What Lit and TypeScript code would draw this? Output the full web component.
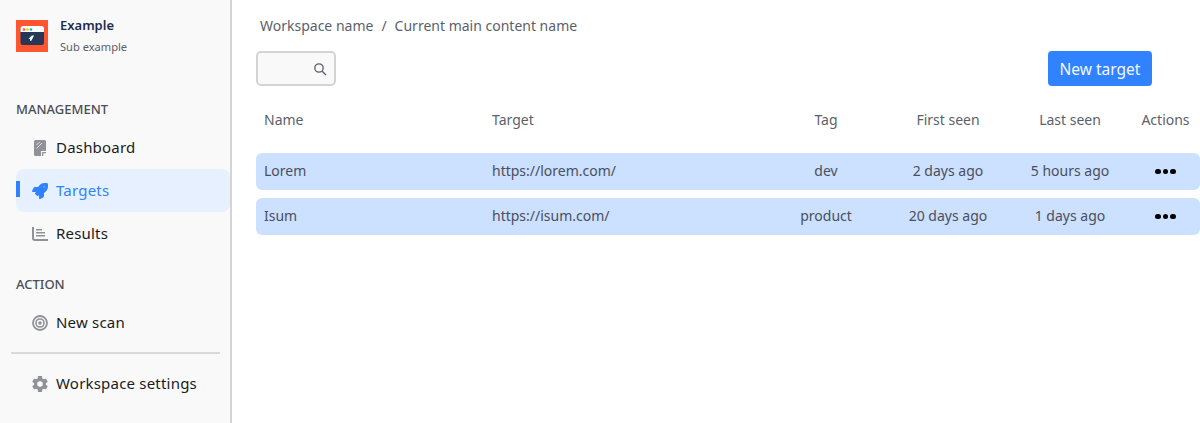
import { LitElement, html, css, svg } from 'lit';
import { customElement } from 'lit/decorators.js';

const rows = [
  { name: 'Lorem', target: 'https://lorem.com/', tag: 'dev', first: '2 days ago', last: '5 hours ago' },
  { name: 'Isum', target: 'https://isum.com/', tag: 'product', first: '20 days ago', last: '1 days ago' },
];

const icons = {
  dashboard: svg`<svg width="12" height="16" viewBox="0 0 12 16"><path fill="#8f9298" d="M1.500 0h9A1.500 1.500 0 0 1 12 1.500V11l-5 5H1.500A1.500 1.500 0 0 1 0 14.500v-13A1.500 1.500 0 0 1 1.500 0z"/><path fill="none" stroke="#e4e4e6" d="M2.500 5l3-3M2.500 8.500l5.500-5.500"/><path fill="#f9f9f9" d="M7 16v-5h5v5z"/><path fill="#8f9298" d="M8 16v-4h4v1.200H9.300V16z"/></svg>`,
  rocket: svg`<svg width="16" height="16" viewBox="0 0 512 512"><path fill="#3182fe" d="M505 19c-2-7-7-11-13-13C461-1 430 0 400 0 300 0 240 54 195 128H94c-16 0-35 12-42 26L4 250c-2 4-4 9-4 14 0 13 11 24 24 24h101l-22 22c-11 11-13 32 0 45l54 54c11 11 32 13 45 0l22-22v101c0 13 11 24 24 24 5 0 10-2 14-4l96-48c14-7 26-26 26-42V317c74-45 128-105 128-205 0-31 1-62-7-93z"/><circle cx="384" cy="128" r="26" fill="#8fbcfe"/></svg>`,
  results: svg`<svg width="16" height="14" viewBox="0 0 16 14"><path fill="#8f9298" d="M0 0h2v11a1 1 0 0 0 1 1h13v2H3a3 3 0 0 1-3-3z"/><path fill="#8f9298" d="M4 2h6v1.400H4zM4 5h9v1.400H4zM4 8h9v1.400H4z"/></svg>`,
  target: svg`<svg width="16" height="16" viewBox="0 0 16 16"><g fill="none" stroke="#8f9298"><circle cx="8" cy="8" r="7" stroke-width="1.800"/><circle cx="8" cy="8" r="4" stroke-width="1.600"/></g><circle cx="8" cy="8" r="1.800" fill="#8f9298"/></svg>`,
  gear: svg`<svg width="16" height="16" viewBox="2 2 20 20"><path fill="#8f9298" fill-rule="evenodd" d="M19.400 13a7.600 7.600 0 0 0 0-2l2.300-1.800-2.400-4.100-2.700 1.100a7.500 7.500 0 0 0-1.700-1L14.500 2h-5L9.100 5.200a7.500 7.500 0 0 0-1.700 1L4.700 5.100 2.300 9.200 4.600 11a7.600 7.600 0 0 0 0 2l-2.300 1.800 2.400 4.100 2.700-1.100a7.500 7.500 0 0 0 1.700 1l.4 3.200h5l.4-3.200a7.500 7.500 0 0 0 1.700-1l2.700 1.100 2.400-4.100zM12 15.500a3.500 3.500 0 1 1 0-7 3.500 3.500 0 0 1 0 7z"/></svg>`,
};

@customElement('app-root')
export class AppRoot extends LitElement {
  static styles = css`
    :host {
      display: flex;
      height: 423px;
      overflow: hidden;
      background: #fff;
      font-family: 'Noto Sans', sans-serif;
      color: #5b5f6b;
      font-size: 14px;
    }
    .side {
      box-sizing: border-box;
      flex: none;
      background: #f9f9f9;
      border-right: 2px solid #d4d4d4;
      width: 232px;
      padding: 20px 0 0;
    }
    .brand { display: flex; gap: 12px; padding-left: 16px; height: 32px; }
    .logo { width: 32px; height: 32px; display: block; }
    .brand-text { display: flex; flex-direction: column; gap: 5px; margin-top: -4px; }
    .brand-name { font-size: 13px; line-height: 18px; font-weight: 600; color: #1f2d4d; }
    .brand-sub { font-size: 11.100px; line-height: 15px; color: #5b5f6b; }
    .section {
      font-size: 13px;
      line-height: 17px;
      font-weight: 500;
      color: #4a4d55;
      padding-left: 16px;
    }
    .section.first { margin-top: 49px; }
    .section.second { margin-top: 21px; }
    nav { display: flex; flex-direction: column; margin-top: 8px; }
    nav.scan { margin-top: 11px; }
    nav.settings { margin-top: 0; }
    .item {
      position: relative;
      display: flex;
      align-items: center;
      gap: 8px;
      height: 43px;
      margin-left: 16px;
      padding-left: 16px;
      border-radius: 8px;
      font-size: 15px;
      letter-spacing: 0.2px;
      color: #1a1c22;
    }
    .label { padding-bottom: 2px; }
    .item.short { height: 38px; }
    .item.active { background: #e6f0ff; color: #3182fe; }
    .item.active::before {
      content: '';
      position: absolute;
      left: 0;
      top: 12px;
      width: 4px;
      height: 16px;
      background: #3182fe;
    }
    .ic { width: 16px; height: 16px; display: flex; align-items: center; justify-content: center; flex: none; }
    .sep { height: 2px; background: #d9d9d9; margin: 10px 0 11px 11px; width: 209px; }
    main { flex: 1; min-width: 0; padding: 16px 0 0 24px; }
    .crumbs { display: flex; gap: 8px; font-size: 14px; line-height: 20px; padding-left: 4px; color: #5b5f6b; }
    .bar { display: flex; justify-content: space-between; align-items: center; margin-top: 15px; padding-right: 48px; }
    .search {
      width: 80px;
      height: 35px;
      box-sizing: border-box;
      border: 2px solid #d4d4d4;
      border-radius: 5px;
      background: #f9f9f9;
      display: flex;
      align-items: center;
      justify-content: flex-end;
      padding-right: 7px;
    }
    .btn {
      width: 104px;
      height: 35px;
      border-radius: 4px;
      background: #3182fe;
      color: #f2f7ff;
      font-size: 15.500px;
      display: flex;
      align-items: center;
      justify-content: center;
    }
    .row {
      display: grid;
      grid-template-columns: 236px 273px 122px 122px 122px 69px;
      align-items: center;
      border-radius: 6px;
    }
    .row > div:nth-child(n + 3) { text-align: center; }
    .row > div:first-child { padding-left: 8px; }
    .head { height: 20px; margin-top: 23px; margin-bottom: 24px; }
    .body { background: #cce0ff; height: 37px; margin-bottom: 8px; color: #4b4f5c; }
    .body > div:not(.dots) { padding-bottom: 2px; }
    .dots { display: flex; justify-content: center; gap: 2px; }
    .dots span { width: 5.500px; height: 5.500px; border-radius: 50%; background: #000; }
  `;

  navItem(label: string, icon: unknown, active = false, short = false) {
    return html`<div class="item ${active ? 'active' : ''} ${short ? 'short' : ''}">
      <span class="ic">${icon}</span><span class="label">${label}</span>
    </div>`;
  }

  render() {
    return html`
      <aside class="side">
        <div class="brand">
          <svg class="logo" viewBox="0 0 32 32">
            <rect width="32" height="32" fill="#ff5630" />
            <rect x="4.500" y="6" width="23.500" height="19" rx="2.500" fill="#253858" />
            <path d="M4.500 12V8.500A2.500 2.500 0 0 1 7 6h18.500A2.500 2.500 0 0 1 28 8.500V12z" fill="#fff" />
            <circle cx="8" cy="9.500" r="1.300" fill="#ff5630" />
            <circle cx="11.500" cy="9.500" r="1.300" fill="#ffc400" />
            <circle cx="15" cy="9.500" r="1.300" fill="#00b8d9" />
            <path d="M18 15.500h-2l-2 2-1.500 1 1.500.5v2l1.500-.5 1-2z" fill="#fff" />
          </svg>
          <div class="brand-text">
            <span class="brand-name">Example</span>
            <span class="brand-sub">Sub example</span>
          </div>
        </div>
        <div class="section first">MANAGEMENT</div>
        <nav>
          ${this.navItem('Dashboard', icons.dashboard)}
          ${this.navItem('Targets', icons.rocket, true)}
          ${this.navItem('Results', icons.results)}
        </nav>
        <div class="section second">ACTION</div>
        <nav class="scan">${this.navItem('New scan', icons.target, false, true)}</nav>
        <div class="sep"></div>
        <nav class="settings">${this.navItem('Workspace settings', icons.gear, false, true)}</nav>
      </aside>
      <main>
        <div class="crumbs"><span>Workspace name</span><span>/</span><span>Current main content name</span></div>
        <div class="bar">
          <div class="search">
            <svg width="14" height="14" viewBox="0 0 14 14" fill="none" stroke="#5b5f6b" stroke-width="1.300">
              <circle cx="6" cy="6" r="4.200" /><path d="M9.200 9.200L13 13" />
            </svg>
          </div>
          <div class="btn">New target</div>
        </div>
        <div class="row head">
          <div>Name</div><div>Target</div><div>Tag</div><div>First seen</div><div>Last seen</div><div>Actions</div>
        </div>
        ${rows.map(
          (r) => html`<div class="row body">
            <div>${r.name}</div><div>${r.target}</div><div>${r.tag}</div><div>${r.first}</div><div>${r.last}</div>
            <div class="dots"><span></span><span></span><span></span></div>
          </div>`
        )}
      </main>
    `;
  }
}
